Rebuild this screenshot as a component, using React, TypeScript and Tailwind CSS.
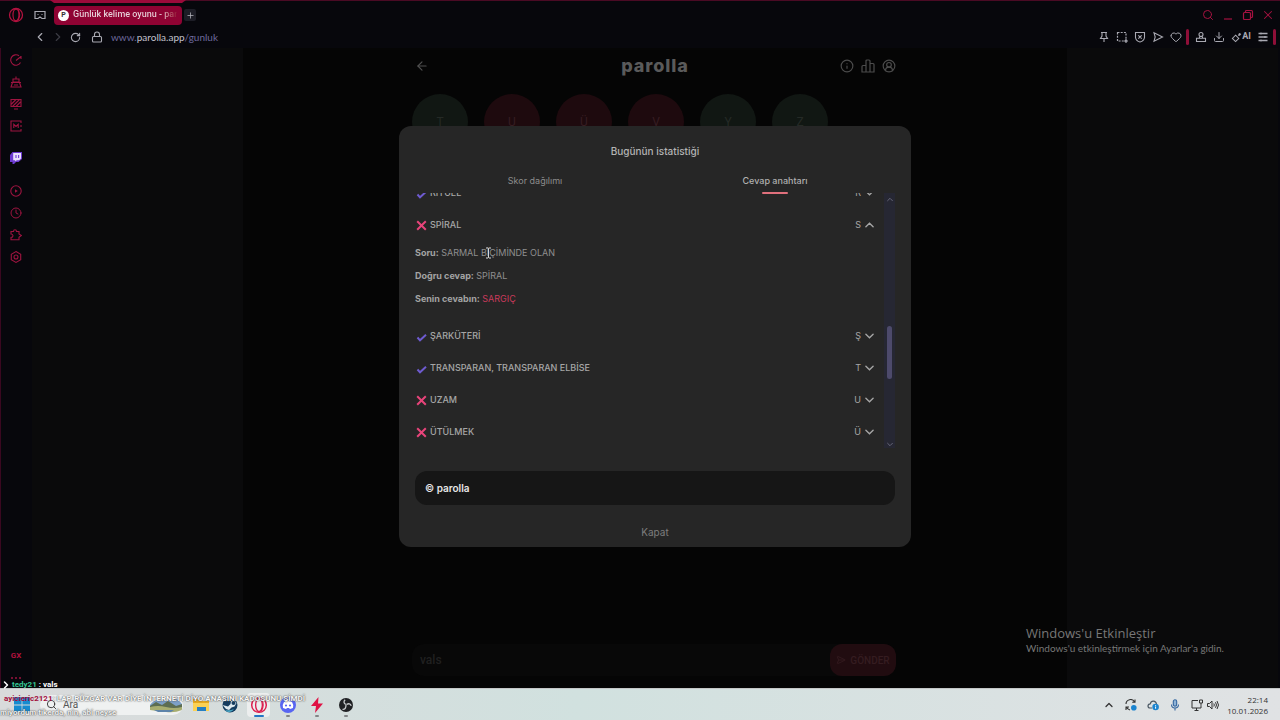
import type { ReactNode } from "react";
import {
  ArrowLeft,
  ChevronLeft,
  ChevronRight,
  ChevronUp,
  CircleUserRound,
  Clock,
  Download,
  Heart,
  Info,
  Lock,
  Plus,
  RotateCw,
  Search,
  SendHorizontal,
  X,
} from "lucide-react";

interface Answer {
  letter: string;
  word: string;
  correct: boolean;
  detail?: { question: string; answer: string; given: string };
}

const answers: Answer[] = [
  { letter: "R", word: "RİTÜEL", correct: true },
  {
    letter: "S",
    word: "SPİRAL",
    correct: false,
    detail: {
      question: "SARMAL BİÇİMİNDE OLAN",
      answer: "SPİRAL",
      given: "SARGIÇ",
    },
  },
  { letter: "Ş", word: "ŞARKÜTERİ", correct: true },
  { letter: "T", word: "TRANSPARAN, TRANSPARAN ELBİSE", correct: true },
  { letter: "U", word: "UZAM", correct: false },
  { letter: "Ü", word: "ÜTÜLMEK", correct: false },
];

const letters = [
  { letter: "T", correct: true },
  { letter: "U", correct: false },
  { letter: "Ü", correct: false },
  { letter: "V", correct: false },
  { letter: "Y", correct: true },
  { letter: "Z", correct: true },
];

export default function App() {
  return (
    <div className="relative flex h-screen flex-col overflow-hidden bg-[#07070c] font-['Roboto',sans-serif]">
      <BrowserHeader />
      <div className="flex min-h-0 flex-1">
        <SideBar />
        <Game />
      </div>
      <Taskbar />
      <Chat />
      <Activation />
    </div>
  );
}

function IconButton({
  label,
  className = "",
  children,
}: {
  label: string;
  className?: string;
  children: ReactNode;
}) {
  return (
    <button
      type="button"
      aria-label={label}
      className={`flex shrink-0 items-center justify-center ${className}`}
    >
      {children}
    </button>
  );
}

function BrowserHeader() {
  return (
    <header className="shrink-0 border-t border-[#4a0a24]">
      <div className="flex h-7 items-center pr-1 pl-2">
        <IconButton label="Menü" className="w-4 text-[#b3123f]">
          <OperaLogo className="size-4" />
        </IconButton>
        <IconButton label="Çalışma alanı" className="ml-2 w-4 text-[#a9a9b2]">
          <svg viewBox="0 0 16 16" className="size-4" fill="none" stroke="currentColor" strokeWidth="1.2">
            <path d="M3 4.500h10v7h-3l-2-1.500-2 1.500H3z" />
            <path d="M5.500 7.500h1M9.500 7.500h1" />
          </svg>
        </IconButton>
        <div className="relative ml-1.5 flex h-7 w-32 items-center">
          <svg
            viewBox="0 0 136 3"
            preserveAspectRatio="none"
            className="absolute -top-px -left-1 h-[3px] w-[136px]"
          >
            <path d="M0 0h136l-4 3H4z" fill="#9b0a3a" />
          </svg>
          <a
            href="#gunluk"
            className="flex h-[19px] w-full items-center gap-1 overflow-hidden rounded-sm bg-[#8f0333] pl-1"
          >
            <span className="flex size-[11px] shrink-0 items-center justify-center rounded-full bg-white text-[7px] font-bold text-[#333]">
              P
            </span>
            <span className="bg-linear-to-r from-[#e9d5dc] from-85% to-[#8f0333] bg-clip-text text-[9px] font-medium whitespace-nowrap text-transparent">
              Günlük kelime oyunu - par
            </span>
          </a>
        </div>
        <IconButton label="Yeni sekme" className="ml-0.5 size-3 rounded-xs bg-[#1d1d26] text-[#b5b5bd]">
          <Plus className="size-[9px]" />
        </IconButton>
        <div className="ml-auto flex items-center gap-1 text-[#a51240]">
          <IconButton label="Ara" className="w-4">
            <Search className="size-3" />
          </IconButton>
          <IconButton label="Küçült" className="w-4">
            <svg viewBox="0 0 12 12" className="size-3" stroke="currentColor" strokeWidth="1.200">
              <path d="M2 10h8" />
            </svg>
          </IconButton>
          <IconButton label="Önceki boyut" className="w-4">
            <svg viewBox="0 0 12 12" className="size-3" fill="none" stroke="currentColor" strokeWidth="1.200">
              <rect x="1.500" y="3.500" width="7" height="7" rx="1" />
              <path d="M3.500 3.500v-1q0-1 1-1h5q1 0 1 1v5q0 1-1 1h-1" />
            </svg>
          </IconButton>
          <IconButton label="Kapat" className="w-4">
            <X className="size-3.5" strokeWidth={1.8} />
          </IconButton>
        </div>
      </div>

      <div className="flex h-[19px] items-start pr-1 pl-8 text-[#a9a9b2]">
        <div className="flex h-4 items-center">
          <IconButton label="Geri" className="w-4">
            <ChevronLeft className="size-3.5" />
          </IconButton>
          <IconButton label="İleri" className="ml-0.5 w-4 text-[#3b3b44]">
            <ChevronRight className="size-3.5" />
          </IconButton>
          <IconButton label="Yenile" className="ml-px w-4">
            <RotateCw className="size-[11px]" strokeWidth={2.4} />
          </IconButton>
          <Lock className="ml-2 size-3" strokeWidth={2.2} />
          <span className="ml-2 font-['Lato',sans-serif] text-[10px] text-[#6d679c]">
            www.<span className="text-[#c2c2cc]">parolla.app</span>/gunluk
          </span>
        </div>

        <div className="ml-auto flex h-4 items-center gap-0.5">
          <IconButton label="Sabitle" className="w-4">
            <svg viewBox="0 0 12 12" className="size-3" fill="none" stroke="currentColor" strokeWidth="1.100">
              <path d="M3 1.500h6M4 1.500V5L2.500 7.500h7L8 5V1.500M6 7.500V11" />
            </svg>
          </IconButton>
          <IconButton label="Anlık görüntü" className="w-4">
            <svg viewBox="0 0 12 12" className="size-3" fill="none" stroke="currentColor" strokeWidth="1.200">
              <rect x="1.500" y="1.500" width="8.500" height="8.500" strokeDasharray="2 1.200" />
              <path d="M10 8v4M8 10h4" />
            </svg>
          </IconButton>
          <IconButton label="Reklam engelleyici" className="w-4">
            <svg viewBox="0 0 12 12" className="size-3" fill="none" stroke="currentColor" strokeWidth="1.100">
              <path d="M1.500 1.500h9v5Q10 10 6 11 2 10 1.500 6.500zM4.300 4.300l3.400 3.400M7.700 4.300L4.300 7.700" />
            </svg>
          </IconButton>
          <IconButton label="Flow" className="w-4">
            <svg viewBox="0 0 12 12" className="size-3" fill="none" stroke="currentColor" strokeWidth="1.100">
              <path d="M2 1.800L10.500 6 2 10.200 3.200 6z" />
            </svg>
          </IconButton>
          <IconButton label="Favori" className="w-4">
            <Heart className="size-3" />
          </IconButton>
          <span className="h-4 w-[3px] rounded-full bg-[#8f0f38]" />
          <IconButton label="Profil" className="ml-0.5 w-4">
            <svg viewBox="0 0 12 12" className="size-3" fill="none" stroke="currentColor" strokeWidth="1.100">
              <circle cx="6" cy="3.500" r="2" />
              <path d="M4.500 5.500v1.800M7.500 5.500v1.800M1.500 7.300h9v3.200h-9z" />
            </svg>
          </IconButton>
          <IconButton label="İndirilenler" className="w-4">
            <Download className="size-3" />
          </IconButton>
          <IconButton label="Yapay zekâ" className="w-6 text-[9px] font-bold">
            <svg viewBox="0 0 12 12" className="size-[11px] shrink-0" fill="none" stroke="currentColor" strokeWidth="1.100">
              <path d="M5 3.500l3.500 3.500L5 10.500 1.500 7zM8 4l1.500-1.500M9.500 1v3M8 2.500h3" />
            </svg>
            AI
          </IconButton>
          <IconButton label="Kenar ayarları" className="w-4">
            <svg viewBox="0 0 12 12" className="size-3" stroke="currentColor" strokeWidth="1.300">
              <path d="M1.500 2.500h9M1.500 6h9M1.500 9.500h9M4 1.500v2M8 5v2M4 8.500v2" />
            </svg>
          </IconButton>
          <span className="h-4 w-[3px] rounded-full bg-[#8f0f38]" />
        </div>
      </div>
    </header>
  );
}

function OperaLogo({ className }: { className?: string }) {
  return (
    <svg viewBox="0 0 16 16" className={className} fill="none" stroke="currentColor">
      <circle cx="8" cy="8" r="6.500" strokeWidth="1.300" />
      <ellipse cx="8" cy="8" rx="3" ry="5.800" strokeWidth="1.200" />
      <path d="M10 2.500q3.500 5.500 0 11" strokeWidth="1" />
    </svg>
  );
}

function SideBar() {
  return (
    <nav className="flex w-8 shrink-0 flex-col items-center border-x border-l-[#3a0820] border-r-transparent text-[#9e1440]">
      <div className="mt-1.5 flex flex-col gap-2.5">
        <IconButton label="Hız göstergesi" className="h-3">
          <svg viewBox="0 0 12 12" className="size-3" fill="none" stroke="currentColor" strokeWidth="1.100">
            <path d="M10.500 8.500A5.200 5.200 0 1 1 9 1.800M6 6.500L11 2.500M11 2v3" />
          </svg>
        </IconButton>
        <IconButton label="Temizleyici" className="h-3">
          <svg viewBox="0 0 12 12" className="size-3" fill="none" stroke="currentColor" strokeWidth="1.100">
            <path d="M6 .500V3M3 3h6v3H3zM1 6.500h10M2.500 6.500L1 11h10L9.500 6.500M4 9h4" />
          </svg>
        </IconButton>
        <IconButton label="Duvar kâğıdı" className="h-3">
          <svg viewBox="0 0 12 12" className="size-3" fill="none" stroke="currentColor" strokeWidth="1.100">
            <path d="M1 1.500h10v7H1zM4 11h4M1.500 6L6 1.500M2.500 8.500l7-7M6 8.500L10.500 4" />
          </svg>
        </IconButton>
        <IconButton label="Modlar" className="h-3">
          <svg viewBox="0 0 12 12" className="size-3" fill="none" stroke="currentColor" strokeWidth="1.100">
            <path d="M11 3V1H1v10h10V9M11 5v2M3.800 8V4.300L6 6.500l2.200-2.200V8" />
          </svg>
        </IconButton>
      </div>
      <IconButton label="Twitch" className="mt-5 h-3">
        <svg viewBox="0 0 12 12" className="size-3">
          <path d="M2.500 0H12v7L8.500 10H6l-2 2H2.500v-2H0V3z" fill="#6d3bd1" />
          <path d="M3.200 1H11v5.500L9 8.200H6.800L5.200 9.600V8.200h-2z" fill="#e9e0fb" />
          <path d="M6 3v3M8.600 3v3" stroke="#6d3bd1" strokeWidth="1.100" />
        </svg>
      </IconButton>
      <div className="mt-[21px] flex flex-col gap-2.5">
        <IconButton label="Oynatıcı" className="h-3">
          <svg viewBox="0 0 12 12" className="size-3" fill="none" stroke="currentColor" strokeWidth="1.100">
            <circle cx="6" cy="6" r="5.200" />
            <path d="M5 4.300L7.800 6 5 7.700z" fill="currentColor" stroke="none" />
          </svg>
        </IconButton>
        <IconButton label="Geçmiş" className="h-3">
          <Clock className="size-3" />
        </IconButton>
        <IconButton label="Uzantılar" className="h-3">
          <svg viewBox="0 0 12 12" className="size-3" fill="none" stroke="currentColor" strokeWidth="1.100">
            <path d="M1 2.500h2.500Q3.500.800 5 .800t1.500 1.700H9V5l2.300 1.500L9 8.200v2.600H1V8.500Q3 8.300 3 6.700T1 5z" />
          </svg>
        </IconButton>
        <IconButton label="Ayarlar" className="h-3">
          <svg viewBox="0 0 12 12" className="size-3" fill="none" stroke="currentColor" strokeWidth="1.100">
            <path d="M6 .600l4.700 2.700v5.400L6 11.400 1.300 8.700V3.300z" />
            <circle cx="6" cy="6" r="2" />
          </svg>
        </IconButton>
      </div>
      <a href="#gx" className="mt-auto text-[8px] font-bold text-[#b3123f]">
        GX
      </a>
      <IconButton label="Daha fazla" className="mt-3 mb-1.5 h-2">
        <svg viewBox="0 0 12 4" className="h-1 w-3" fill="currentColor">
          <circle cx="2" cy="2" r="1" />
          <circle cx="6" cy="2" r="1" />
          <circle cx="10" cy="2" r="1" />
        </svg>
      </IconButton>
    </nav>
  );
}

function Game() {
  return (
    <main className="relative mr-0.5 flex min-w-0 flex-1 justify-center bg-[#0a0a0b]">
      <div className="flex w-full max-w-[824px] flex-col items-center bg-[#050505]">
        <div className="flex w-full max-w-[486px] flex-1 flex-col">
          <div className="grid h-9 grid-cols-3 items-center px-0.5 text-[#505050]">
            <IconButton label="Geri dön" className="w-4">
              <ArrowLeft className="size-3.5" />
            </IconButton>
            <h1 className="text-center font-['Inter',sans-serif] text-lg font-extrabold tracking-wider text-[#5a5a5a]">
              parolla
            </h1>
            <div className="flex justify-end gap-[7px] text-[#4c4c4c]">
              <IconButton label="Bilgi">
                <Info className="size-3.5" strokeWidth={2} />
              </IconButton>
              <IconButton label="İstatistik">
                <svg viewBox="0 0 14 14" className="size-3.5" fill="none" stroke="currentColor" strokeWidth="1.200">
                  <path d="M1 13V7.500q0-1 1-1h3V2q0-1 1-1h2q1 0 1 1v2.500h3q1 0 1 1V13zM5 6v7M9 4.500V13" />
                </svg>
              </IconButton>
              <IconButton label="Profil">
                <CircleUserRound className="size-3.5" strokeWidth={2} />
              </IconButton>
            </div>
          </div>
          <div className="mt-2.5 flex gap-4">
            {letters.map((item) => (
              <span
                key={item.letter}
                className={`flex size-14 items-center justify-center rounded-full text-xs ${
                  item.correct
                    ? "bg-[#111713] text-[#252a26]"
                    : "bg-[#1e0a0e] text-[#361d22]"
                }`}
              >
                {item.letter}
              </span>
            ))}
          </div>
          <form className="mt-auto mr-0.5 mb-3 flex h-8 rounded-xl bg-[#080808]">
            <input
              aria-label="Cevap"
              defaultValue="vals"
              className="min-w-0 flex-1 bg-transparent px-2 text-xs font-medium text-[#202020] outline-none"
            />
            <button
              type="button"
              className="flex w-[66px] items-center justify-center gap-1 rounded-xl bg-[#210c10] text-[10px] font-medium text-[#351c20]"
            >
              <SendHorizontal className="size-2.5" />
              GÖNDER
            </button>
          </form>
        </div>
      </div>
      <StatsDialog />
    </main>
  );
}

function StatsDialog() {
  return (
    <div className="absolute inset-0 flex items-start justify-center pt-[78px] font-['Inter',sans-serif]">
      <section
        role="dialog"
        aria-labelledby="stats-title"
        className="w-full max-w-lg rounded-xl bg-[#262626] px-4 text-[#a6a6a6]"
      >
        <h2
          id="stats-title"
          className="pt-4 text-center text-[10px] leading-[18px] font-medium text-[#b4b4b4]"
        >
          Bugünün istatistiği
        </h2>
        <div role="tablist" className="mt-[9px] grid grid-cols-2 text-[9px]">
          <button type="button" role="tab" aria-selected="false" className="h-6 text-[#8c8c8c]">
            Skor dağılımı
          </button>
          <button
            type="button"
            role="tab"
            aria-selected="true"
            className="relative h-6 font-medium text-[#b0b0b0]"
          >
            Cevap anahtarı
            <span className="absolute -bottom-px left-1/2 h-0.5 w-[26px] -translate-x-1/2 rounded-full bg-[#e0707c]" />
          </button>
        </div>

        <div className="flex h-[255px]">
          <ul className="flex h-full flex-1 flex-col justify-end overflow-hidden">
            {answers.map((item) => (
              <AnswerRow key={item.letter} item={item} />
            ))}
          </ul>
          <div className="ml-2 flex w-[11px] flex-col items-center justify-between bg-[#262733] text-[#6d6d80]">
            <Caret up className="mt-1 h-[5px] w-1.5" />
            <span className="mt-[61px] h-[53px] w-[5px] rounded-full bg-[#4d4a6b]" />
            <Caret className="mb-px h-[5px] w-1.5" />
          </div>
        </div>

        <div className="mt-[23px] flex h-[34px] items-center rounded-xl bg-[#161616] px-2.5 text-[10px] font-semibold text-[#e6e6e6]">
          © parolla
        </div>
        <button type="button" className="mt-3.5 mb-0.5 h-[26px] w-full text-[10px] text-[#7d7d7d]">
          Kapat
        </button>
      </section>
    </div>
  );
}

function Caret({ up = false, className }: { up?: boolean; className: string }) {
  return (
    <svg
      viewBox="0 0 10 6"
      className={className}
      fill="none"
      stroke="currentColor"
      strokeWidth="1.500"
      strokeLinecap="round"
    >
      <path d={up ? "M1 5l4-4 4 4" : "M1 1l4 4 4-4"} />
    </svg>
  );
}

function AnswerRow({ item }: { item: Answer }) {
  const { detail } = item;

  return (
    <li className="shrink-0">
      <button
        type="button"
        aria-expanded={Boolean(detail)}
        className="flex h-8 w-full items-center pr-0.5 pl-px text-[9px] font-medium"
      >
        <svg viewBox="0 0 11 11" className="size-[11px]" fill="none" strokeWidth="2">
          {item.correct ? (
            <path d="M1.500 6.500l2.500 2.800L10 3.800" stroke="#6e5bd0" />
          ) : (
            <path d="M1.200 1.200l8.600 8.600M9.800 1.200L1.200 9.800" stroke="#e8447a" />
          )}
        </svg>
        <span className="ml-[3px]">{item.word}</span>
        <span className="ml-auto font-normal">{item.letter}</span>
        <Caret up={Boolean(detail)} className="ml-1 h-1.5 w-[9px]" />
      </button>
      {detail && (
        <div className="relative pb-2.5 text-[9px] leading-[23px] text-[#8f8f8f]">
          <p>
            <b className="text-[#a3a3a3]">Soru:</b> {detail.question}
          </p>
          <p>
            <b className="text-[#a3a3a3]">Doğru cevap:</b> {detail.answer}
          </p>
          <p>
            <b className="text-[#a3a3a3]">Senin cevabın:</b>{" "}
            <span className="text-[#c93a5c]">{detail.given}</span>
          </p>
          <svg
            viewBox="0 0 7 12"
            className="absolute top-1.5 left-[70px] h-3 w-[7px]"
            fill="none"
            stroke="#d8d8d8"
          >
            <path d="M1 1h2l.500.500L4 1h2M3.500 1.500v9M1 11h2l.500-.500.500.500h2" />
          </svg>
        </div>
      )}
    </li>
  );
}

function Activation() {
  return (
    <div className="absolute right-[54px] bottom-16 w-[200px] font-['Open_Sans',sans-serif] whitespace-nowrap text-[#777777]">
      <p className="text-[13px] leading-4">Windows'u Etkinleştir</p>
      <p className="font-['Lato',sans-serif] text-[10px] leading-[15px]">
        Windows'u etkinleştirmek için Ayarlar'a gidin.
      </p>
    </div>
  );
}

function Chat() {
  return (
    <div className="absolute bottom-0 left-0 text-[8px] leading-[14px] font-bold whitespace-nowrap text-white">
      <p className="flex items-center">
        <ChevronRight className="size-3" strokeWidth={3} />
        <span className="text-[#35c795]">tedy21</span>
        <span className="ml-0.5">: vals</span>
      </p>
      <p className="pl-1 text-[#f5f5f5] [text-shadow:0_0_1px_#555,0_0_2px_#555]">
        <span className="text-[#a30d3c] [text-shadow:none]">ayicieric2121</span>: LAP, RÜZGAR VAR
        DİYE İNTERNETİ DİYO ANASINI KADOSUNU ŞİMDİ
      </p>
      <p className="text-[#eeeeee] [text-shadow:0_0_1px_#555,0_0_2px_#555]">
        miyordum tikerda, nin, abi neyse
      </p>
    </div>
  );
}

function TaskButton({
  label,
  active = false,
  running = false,
  children,
}: {
  label: string;
  active?: boolean;
  running?: boolean;
  children: ReactNode;
}) {
  return (
    <button
      type="button"
      aria-label={label}
      className={`relative flex h-6 w-[23px] items-center justify-center rounded-sm ${
        active ? "bg-[#eceeee]" : ""
      }`}
    >
      {children}
      {running && (
        <span
          className={`absolute bottom-0 h-0.5 rounded-full ${
            active ? "w-2.5 bg-[#2476c4]" : "w-1 bg-[#828587]"
          }`}
        />
      )}
    </button>
  );
}

function Taskbar() {
  return (
    <footer className="flex h-8 shrink-0 items-center border-t border-[#c4c7c7] bg-linear-to-r from-[#d9dadb] via-[#d1e1df] via-45% to-[#e0e2e4] pr-3 pl-3.5">
      <IconButton label="Başlat" className="w-4">
        <svg viewBox="0 0 16 16" className="size-4" fill="#168bd0">
          <path d="M0 0h7.600v7.600H0zM8.400 0H16v7.600H8.400zM0 8.400h7.600V16H0zM8.400 8.400H16V16H8.400z" />
        </svg>
      </IconButton>
      <label className="ml-2.5 flex h-5 w-[143px] items-center gap-1.5 overflow-hidden rounded-full bg-[#eff1f1] pl-1.5">
        <Search className="size-[11px] shrink-0 text-[#333]" />
        <input
          aria-label="Ara"
          placeholder="Ara"
          className="w-0 min-w-0 flex-1 bg-transparent text-[10px] outline-none placeholder:text-[#555]"
        />
        <svg viewBox="0 0 34 20" className="h-5 w-[34px] shrink-0">
          <path d="M1 10q4-6 12-5t11-1 9 5v4H1z" fill="#7da0c8" />
          <path d="M1 11l6-4 6 3 6-4 8 5 6-2v5H1z" fill="#5c6d52" />
          <path d="M1 12q8-2 16 0t16 0v3q-7 3-16 2T1 15z" fill="#a7ad70" />
          <path d="M5 15h20l-3 2H9z" fill="#5d83a9" />
        </svg>
      </label>
      <div className="ml-1.5 flex gap-1.5">
        <TaskButton label="Dosya Gezgini">
          <svg viewBox="0 0 16 14" className="h-3.5 w-4">
            <path d="M0 1h6l2 2h8v10H0z" fill="#e9ab20" />
            <path d="M0 5h16v8H0z" fill="#fbd154" />
            <path d="M4 9h9v4H4z" fill="#267fc3" />
          </svg>
        </TaskButton>
        <TaskButton label="Steam">
          <svg viewBox="0 0 16 16" className="size-4">
            <circle cx="8" cy="8" r="7.500" fill="#153c5f" />
            <path d="M0.500 8l5.500 1.500 2.500-2.500L9 4l3-1 2.500 3-2 3.500-3 1L7 13l-3-1z" fill="#dce8ee" />
            <circle cx="11.500" cy="6" r="2" fill="#153c5f" />
            <path d="M3 13q5 1 9-1-2 3.500-5 3.300T3 13z" fill="#48a3c2" />
          </svg>
        </TaskButton>
        <TaskButton label="Opera GX" active running>
          <OperaLogo className="size-[18px] text-[#dc1e4f]" />
        </TaskButton>
        <TaskButton label="Discord" running>
          <svg viewBox="0 0 16 16" className="size-4">
            <circle cx="8" cy="8" r="8" fill="#5865f2" />
            <path d="M4 5q4-2 8 0 2 3 1 6l-3 1-1-1H7l-1 1-3-1q-1-3 1-6z" fill="#fff" />
            <circle cx="6" cy="8.500" r="1.100" fill="#5865f2" />
            <circle cx="10" cy="8.500" r="1.100" fill="#5865f2" />
          </svg>
        </TaskButton>
        <TaskButton label="Şimşek" running>
          <svg viewBox="0 0 14 16" className="h-4 w-3.5" fill="#df1245">
            <path d="M8.500 0L1 9h5l-1 7 8-9.500H8z" />
          </svg>
        </TaskButton>
        <TaskButton label="OBS Studio" running>
          <svg viewBox="0 0 16 16" className="size-3.5">
            <circle cx="8" cy="8" r="8" fill="#202124" />
            <g fill="none" stroke="#c7c9cb" strokeWidth="1.500">
              <path d="M7 2q-3 3 1 5.500M14 9q-1.500-4-5.500-1.500M4 13q4 .500 4-5" />
            </g>
          </svg>
        </TaskButton>
      </div>

      <div className="ml-auto flex items-center text-[#333]">
        <IconButton label="Gizli simgeler" className="w-4">
          <ChevronUp className="size-3" strokeWidth={2.6} />
        </IconButton>
        <IconButton label="Güncelleme" className="ml-1.5 w-4">
          <svg viewBox="0 0 12 12" className="size-3" fill="none" stroke="currentColor" strokeWidth="1.100">
            <path d="M1 5a4.500 4.500 0 0 1 8.500-2M10 .500V3.300H7.200M5 11Q2.500 10.500 1.500 8M1 11V8h3" />
            <circle cx="8.800" cy="8.800" r="2.800" fill="#1b84cf" stroke="none" />
          </svg>
        </IconButton>
        <IconButton label="OneDrive" className="ml-1.5 w-4">
          <svg viewBox="0 0 12 12" className="size-3" fill="none">
            <path d="M5 9H3Q1 9 1 7t2.300-2.200Q4 2 6.500 2.200T9.500 5" stroke="#4d5a66" strokeWidth="1.200" />
            <circle cx="8.600" cy="8" r="3.300" fill="#1b84cf" />
            <path d="M8.600 7.500v2.200M8.600 6v.800" stroke="#fff" />
          </svg>
        </IconButton>
        <IconButton label="Mikrofon" className="ml-1.5 w-4 text-[#33669f]">
          <svg viewBox="0 0 12 12" className="size-3" fill="none" stroke="currentColor" strokeWidth="1.100">
            <rect x="4.300" y=".800" width="3.400" height="6.400" rx="1.700" fill="#8db2d6" />
            <path d="M2.500 5.500q0 3.500 3.500 3.500t3.500-3.500M6 9v2.500" />
          </svg>
        </IconButton>
        <IconButton label="Ağ" className="ml-1.5 w-4">
          <svg viewBox="0 0 12 12" className="size-3" fill="none" stroke="currentColor">
            <path d="M7 1.500H1v7.500h9V6.500M3.500 11.500h4M5.500 9v2.500M8.500 1h3v3h-3zM10 4v2.500" />
          </svg>
        </IconButton>
        <IconButton label="Ses" className="w-4">
          <svg viewBox="0 0 12 12" className="size-3" fill="none" stroke="currentColor">
            <path d="M.500 4.500h2L5 2v8L2.500 7.500h-2zM6.800 4.500q1 1.500 0 3M8.500 3.200q2 2.800 0 5.600M10 2q3 4 0 8" />
          </svg>
        </IconButton>
        <div className="ml-1.5 text-right font-['Open_Sans',sans-serif] text-[8px] leading-[11px] whitespace-nowrap">
          <p>22:14</p>
          <p>10.01.2026</p>
        </div>
      </div>
    </footer>
  );
}
